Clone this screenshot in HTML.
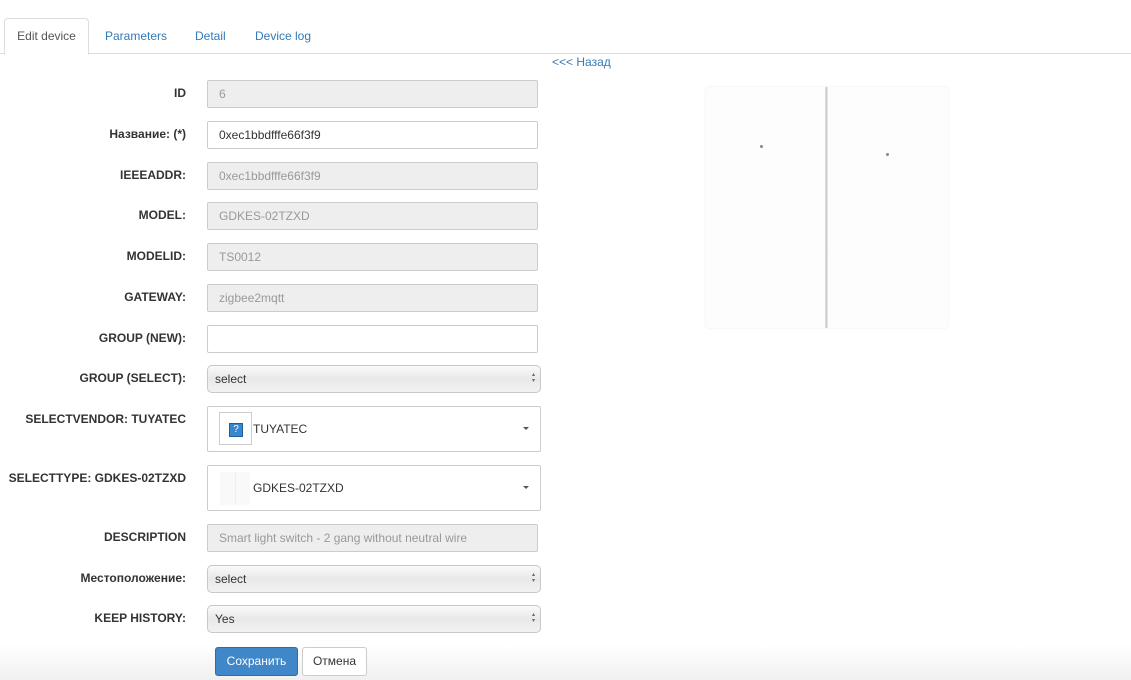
<!DOCTYPE html>
<html><head><meta charset="utf-8"><style>
*{box-sizing:border-box}
body{margin:0;width:1131px;height:680px;overflow:hidden;background:#fff;font-family:"Liberation Sans",Arial,sans-serif;font-size:12px;color:#333;position:relative}
.fade{position:absolute;left:0;right:0;top:645px;height:35px;background:linear-gradient(#fff,#f0f0f0)}
.tabs{position:absolute;left:0;top:18px;width:1131px;height:36px;border-bottom:1px solid #ddd}
.tab{position:absolute;top:1px;height:36px;line-height:35px;font-size:12px;color:#337ab7}
.tab.active{left:4px;top:0;width:85px;border:1px solid #ddd;border-bottom-color:#fff;border-radius:4px 4px 0 0;color:#555;text-align:center;background:#fff;height:37px}
.back{position:absolute;left:552px;top:55px;color:#337ab7;font-size:12px}
.lbl{position:absolute;right:945px;font-weight:bold;font-size:12px;text-align:right;white-space:nowrap;color:#333}
.inp{position:absolute;left:207px;width:331px;height:28px;border:1px solid #ccc;border-radius:2px;padding:0 11px;line-height:26px;font-size:12px;color:#555}
.dis{background:#eee;color:#999}
.sel{position:absolute;left:207px;width:334px;height:28px;border:1px solid #c8c8c8;border-radius:5px;padding:0 7px;line-height:26px;font-size:12px;color:#333;background:linear-gradient(#fafafa,#e8e8e8 50%,#f2f2f2)}
.sel:after{content:"\25B4\A\25BE";white-space:pre;position:absolute;right:5px;top:6px;font-size:6px;line-height:6px;color:#666}
.s2{position:absolute;left:207px;width:334px;height:46px;border:1px solid #ccc;border-radius:2px;font-size:12px}
.s2 .t{position:absolute;left:45px;top:15px;color:#333}
.s2 .c{position:absolute;right:11px;top:20px;width:0;height:0;border-left:3px solid transparent;border-right:3px solid transparent;border-top:3px solid #555}
.btn{position:absolute;top:647px;height:29px;line-height:27px;border-radius:3px;font-size:12px;text-align:center}
</style></head><body>
<div class="fade"></div>
<div class="tabs">
<div class="tab active">Edit device</div>
<div class="tab" style="left:105px">Parameters</div>
<div class="tab" style="left:195px">Detail</div>
<div class="tab" style="left:255px">Device log</div>
</div>
<div class="back">&lt;&lt;&lt; Назад</div>

<div class="lbl" style="top:86px">ID</div><div class="inp dis" style="top:80px">6</div>
<div class="lbl" style="top:127px">Название: (*)</div><div class="inp" style="top:121px;color:#333">0xec1bbdfffe66f3f9</div>
<div class="lbl" style="top:168px">IEEEADDR:</div><div class="inp dis" style="top:162px">0xec1bbdfffe66f3f9</div>
<div class="lbl" style="top:208px">MODEL:</div><div class="inp dis" style="top:202px">GDKES-02TZXD</div>
<div class="lbl" style="top:249px">MODELID:</div><div class="inp dis" style="top:243px">TS0012</div>
<div class="lbl" style="top:290px">GATEWAY:</div><div class="inp dis" style="top:284px">zigbee2mqtt</div>
<div class="lbl" style="top:331px">GROUP (NEW):</div><div class="inp" style="top:325px"></div>
<div class="lbl" style="top:371px">GROUP (SELECT):</div><div class="sel" style="top:365px">select</div>
<div class="lbl" style="top:412px">SELECTVENDOR: TUYATEC</div>
<div class="s2" style="top:406px"><div style="position:absolute;left:11px;top:5px;width:33px;height:33px;border:1px solid #ccc;background:#fff"><div style="position:absolute;left:9px;top:10px;width:14px;height:14px;background:#3a88cc;border:1px solid #1d5d99;color:#fff;font-size:10px;line-height:12px;text-align:center">?</div></div><span class="t">TUYATEC</span><span class="c"></span></div>
<div class="lbl" style="top:471px">SELECTTYPE: GDKES-02TZXD</div>
<div class="s2" style="top:465px"><div style="position:absolute;left:12px;top:6px;width:30px;height:33px;background:#f9f9f9"><div style="position:absolute;left:15px;top:0;width:1px;height:33px;background:#eee"></div></div><span class="t">GDKES-02TZXD</span><span class="c"></span></div>
<div class="lbl" style="top:530px">DESCRIPTION</div><div class="inp dis" style="top:524px">Smart light switch - 2 gang without neutral wire</div>
<div class="lbl" style="top:571px">Местоположение:</div><div class="sel" style="top:565px">select</div>
<div class="lbl" style="top:611px">KEEP HISTORY:</div><div class="sel" style="top:605px">Yes</div>
<div class="btn" style="left:215px;width:83px;background:#3f87c9;border:1px solid #2e6da4;color:#fff">Сохранить</div>
<div class="btn" style="left:302px;width:65px;background:#fff;border:1px solid #ccc;color:#333">Отмена</div>

<div style="position:absolute;left:706px;top:87px;width:242px;height:241px;background:#fdfdfd;border-radius:3px;box-shadow:0 0 2px #e8e8e8">
<div style="position:absolute;left:119px;top:0;width:3px;height:241px;background:linear-gradient(90deg,#e4e4e4,#c8c8c8,#eee)"></div>
<div style="position:absolute;left:54px;top:58px;width:3px;height:3px;background:#888;border-radius:50%"></div>
<div style="position:absolute;left:180px;top:66px;width:3px;height:3px;background:#888;border-radius:50%"></div>
</div>
</body></html>
